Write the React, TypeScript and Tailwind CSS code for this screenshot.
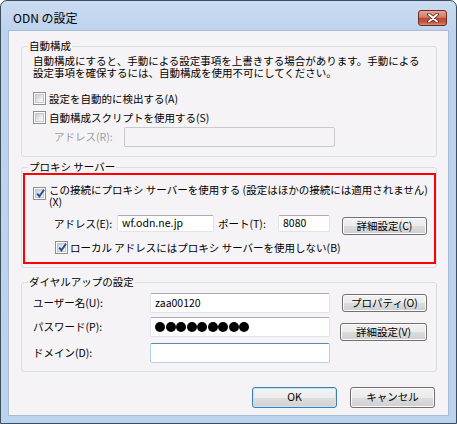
import type { ReactNode } from 'react';

const font = "font-['Noto_Sans_CJK_JP','Noto_Sans',sans-serif]";

function Checkbox({ checked = false }: { checked?: boolean }) {
  return (
    <span className="relative flex h-[13px] w-[13px] shrink-0 items-center justify-center border border-[#8f8f8f] bg-[#fdfdfd]">
      <span className="h-[9px] w-[9px] border border-[#c3c6cb] bg-[linear-gradient(135deg,#c9ccd1,#eef0f2_70%,#f8f8f8)]" />
      {checked && (
        <svg className="absolute left-[1px] top-[0px]" width="11" height="11" viewBox="0 0 11 11">
          <path d="M2.2 5.6 L4.4 8.4 L9 1.8" fill="none" stroke="#2c4a9a" strokeWidth="1.9" />
        </svg>
      )}
    </span>
  );
}

type Tone = 'normal' | 'focus' | 'disabled';

function TextBox({ value, className, tone = 'normal' }: { value?: ReactNode; className: string; tone?: Tone }) {
  const skin =
    tone === 'focus'
      ? 'border-[#b4d0ea] border-t-[#5e88b3] bg-white'
      : tone === 'disabled'
        ? 'border-[#c9cacd] bg-transparent'
        : 'border-[#e0e3e8] border-t-[#abadb3] bg-white';
  return (
    <div className={`flex shrink-0 items-center rounded-[2px] border pl-[4px] leading-none ${skin} ${className}`}>
      {value}
    </div>
  );
}

function Btn({ children, className, primary = false }: { children: ReactNode; className: string; primary?: boolean }) {
  const skin = primary
    ? 'border-[#3c7fb1] shadow-[inset_0_0_0_1px_#c2e4f6] bg-[linear-gradient(#f3f3f3_0%,#ececec_50%,#dedede_50%,#d2d2d2_100%)]'
    : 'border-[#707070] shadow-[inset_0_0_0_1px_#fcfcfc] bg-[linear-gradient(#f2f2f2_0%,#ebebeb_50%,#dddddd_50%,#cfcfcf_100%)]';
  return (
    <div className={`flex shrink-0 items-center justify-center rounded-[3px] border leading-none ${skin} ${className}`}>
      {children}
    </div>
  );
}

function Group({ label, className, children }: { label: string; className: string; children: ReactNode }) {
  return (
    <section className={`relative shrink-0 rounded-[3px] border border-[#d5dfe5] ${className}`}>
      <span className="absolute left-[6px] top-[-8px] bg-[#f5f3f6] px-[1px] leading-[13px]">{label}</span>
      {children}
    </section>
  );
}

export default function App() {
  return (
    <div className="h-[424px] w-[457px] bg-white">
      <div
        className={`flex h-[424px] w-[457px] flex-col rounded-t-[7px] border border-[#3d4c5e] bg-[linear-gradient(#cadcf1,#bdd3ed_30px,#bcd3ee)] px-[7px] pb-[7px] text-[10.5px] text-black ${font}`}
      >
        <header className="flex h-[29px] shrink-0 items-center justify-between pl-[5px] pr-[2px] pt-[4px]">
          <span className="text-[12px] leading-[16px]">ODN の設定</span>
          <div className="flex h-[16px] w-[29px] items-center justify-center rounded-[3px] border border-[#6b2c22] bg-[linear-gradient(#e6a595,#d2796a_45%,#bf4631_52%,#c5563f_80%,#df8a70)]">
            <svg width="12" height="10" viewBox="0 0 12 10">
              <path d="M2 1.5 L10 8.5 M10 1.5 L2 8.5" stroke="#5a2018" strokeWidth="3.6" strokeLinecap="round" />
              <path d="M2 1.5 L10 8.5 M10 1.5 L2 8.5" stroke="#ffffff" strokeWidth="2" strokeLinecap="round" />
            </svg>
          </div>
        </header>

        <main className="flex h-[386px] shrink-0 flex-col border border-[#a9bcd3] bg-[#f5f3f6] pl-[12px] pr-[11px] pt-[15px]">
          <Group label="自動構成" className="h-[111px]">
            <div className="pl-[11px] pt-[8px]">
              <p className="whitespace-nowrap leading-[12px]">
                自動構成にすると、手動による設定事項を上書きする場合があります。手動による
                <br />
                設定事項を確保するには、自動構成を使用不可にしてください。
              </p>
              <label className="mt-[13px] flex h-[13px] items-center gap-[3px]">
                <Checkbox />
                <span>設定を自動的に検出する(A)</span>
              </label>
              <label className="mt-[6px] flex h-[13px] items-center gap-[3px]">
                <Checkbox />
                <span>自動構成スクリプトを使用する(S)</span>
              </label>
              <div className="mt-[3px] flex h-[20px] items-center">
                <span className="ml-[21px] w-[70px] text-[#9d9d9d]">アドレス(R):</span>
                <TextBox tone="disabled" className="h-[20px] w-[211px]" />
              </div>
            </div>
          </Group>

          <Group label="プロキシ サーバー" className="mt-[10px] h-[101px]">
            <div className="ml-[1px] mt-[5px] h-[91px] border-2 border-[#ff0000]">
              <div className="flex items-start gap-[3px] pl-[8px] pt-[9px]">
                <span className="mt-[3px]">
                  <Checkbox checked />
                </span>
                <p className="whitespace-nowrap leading-[12px]">
                  この接続にプロキシ サーバーを使用する (設定はほかの接続には適用されません)
                  <br />
                  (X)
                </p>
              </div>
              <div className="mt-[7px] flex h-[20px] items-start">
                <div className="flex h-[17px] items-center">
                  <span className="ml-[29px] w-[63px]">アドレス(E):</span>
                  <TextBox value="wf.odn.ne.jp" className="h-[17px] w-[97px]" />
                  <span className="ml-[4px] w-[60px]">ポート(T):</span>
                  <TextBox value="8080" className="h-[17px] w-[52px]" />
                </div>
                <Btn className="ml-[12px] mt-[2px] h-[18px] w-[85px]">詳細設定(C)</Btn>
              </div>
              <label className="ml-[30px] mt-[6px] flex h-[13px] items-center gap-[2px]">
                <Checkbox checked />
                <span>ローカル アドレスにはプロキシ サーバーを使用しない(B)</span>
              </label>
            </div>
          </Group>

          <Group label="ダイヤルアップの設定" className="mt-[14px] h-[90px]">
            <div className="flex">
              <div className="flex flex-col pl-[11px] pt-[10px]">
                <div className="flex h-[20px] items-center">
                  <span className="w-[117px]">ユーザー名(U):</span>
                  <TextBox value="zaa00120" className="h-[20px] w-[180px]" />
                </div>
                <div className="mt-[4px] flex h-[20px] items-center">
                  <span className="w-[117px]">パスワード(P):</span>
                  <TextBox
                    className="h-[20px] w-[180px] gap-[0.5px] pl-[3px]"
                    value={Array.from({ length: 9 }, (_, i) => (
                      <span key={i} className="h-[10px] w-[10px] rounded-full bg-black" />
                    ))}
                  />
                </div>
                <div className="mt-[6px] flex h-[20px] items-center">
                  <span className="w-[117px]">ドメイン(D):</span>
                  <TextBox tone="focus" className="h-[20px] w-[180px]" />
                </div>
              </div>
              <div className="ml-[10px] flex w-[87px] flex-col items-end pt-[11px]">
                <Btn className="h-[18px] w-[85px]">プロパティ(O)</Btn>
                <Btn className="mt-[11px] h-[18px] w-[87px]">詳細設定(V)</Btn>
              </div>
            </div>
          </Group>

          <div className="mt-[15px] flex justify-end gap-[13px] pr-[2px]">
            <Btn primary className="h-[21px] w-[85px]">
              OK
            </Btn>
            <Btn className="h-[21px] w-[85px]">キャンセル</Btn>
          </div>
        </main>
      </div>
    </div>
  );
}
